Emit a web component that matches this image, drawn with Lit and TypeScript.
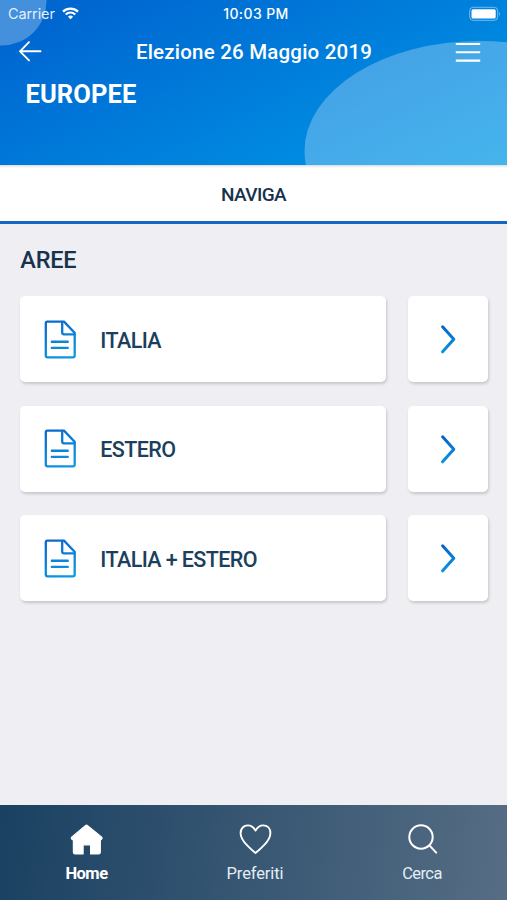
import { LitElement, html, css, svg } from "lit";
import { customElement, property } from "lit/decorators.js";

@customElement("area-row")
class AreaRow extends LitElement {
  @property() label = "";

  static styles = css`
    :host { display: grid; grid-template-columns: 366px 80px; gap: 21.7px; height: 86px; }
    .card {
      display: flex; align-items: center; background: #fff; border-radius: 5px;
      box-shadow: 1px 2px 3px rgba(0, 0, 0, 0.17);
    }
    .doc { width: 32px; height: 39px; margin-left: 24px; flex: none; }
    .label {
      margin: 3px 0 0 24px; color: #1c3f5e; font-size: 21.5px; line-height: 28px;
      font-weight: 500; letter-spacing: -0.6px; white-space: pre;
    }
    .go { justify-content: center; }
    .chevron { width: 18px; height: 32px; }
  `;

  render() {
    return html`
      <div class="card">
        <svg class="doc" viewBox="0 0 32 38" preserveAspectRatio="none" fill="none" stroke="url(#g)" stroke-width="2.3" stroke-linejoin="round" stroke-linecap="round">
          <defs><linearGradient id="g" gradientUnits="userSpaceOnUse" x1="6" y1="0" x2="22" y2="38">
            <stop offset="0" stop-color="#0b68cc" /><stop offset="1" stop-color="#0d98e2" />
          </linearGradient></defs>
          <path d="M3.2 1.6H20L30.7 12.5V34.6Q30.7 36.4 28.8 36.4H3.6Q1.8 36.4 1.8 34.6V3.3Q1.8 1.600 3.200 1.600Z" />
          <path d="M18.2 2V12.200Q18.200 14 20 14H30.500" />
          <path d="M7.800 21.200H23.800M7.800 27.100H23.800" />
        </svg>
        <span class="label">${this.label}</span>
      </div>
      <div class="card go">
        <svg class="chevron" viewBox="0 0 18 32" fill="none" stroke="url(#c)" stroke-width="3" stroke-linecap="round" stroke-linejoin="round">
          <defs><linearGradient id="c" gradientUnits="userSpaceOnUse" x1="4" y1="3" x2="9" y2="29">
            <stop offset="0" stop-color="#0860c6" /><stop offset="1" stop-color="#0994e2" />
          </linearGradient></defs>
          <path d="M3.6 3.8L14.8 16.3L3.6 28.8" />
        </svg>
      </div>`;
  }
}

const homeIcon = svg`<path fill="#fff" stroke="#fff" stroke-width="1.2" stroke-linejoin="round"
  d="M16.5 2.1Q17 2.1 17.6 2.6L31.7 14.1Q32.6 15.2 31.4 16.4L30.3 17V29.2Q30.3 31 28.5 31H20.600V21.800H13.100V31H5.2Q3.4 31 3.4 29.2V17L2 16.4Q.8 15.2 1.7 14.1L15.4 2.6Q16 2.1 16.5 2.1Z"/>`;
const heartIcon = svg`<path fill="none" stroke="#fff" stroke-width="1.9" stroke-linejoin="round"
  d="M16.5 30Q14 28.2 8.2 22.4Q1.6 15.6 1.6 10.2C1.6 5.4 4.7 2.4 8.8 2.4C12.3 2.4 14.7 4.3 16.5 7.6C18.3 4.3 20.7 2.4 24.2 2.4C28.3 2.4 31.4 5.4 31.4 10.2Q31.4 15.6 24.8 22.4Q19 28.2 16.5 30Z"/>`;
const searchIcon = svg`<g fill="none" stroke="#fff" stroke-width="2" stroke-linecap="round">
  <circle cx="15" cy="14" r="11.7"/><path d="M23.400 22.400L30.200 29.600"/></g>`;

@customElement("app-root")
class AppRoot extends LitElement {
  static styles = css`
    :host {
      display: flex; flex-direction: column; height: 900px; width: 507px; overflow: hidden;
      background: #efeef3; font-family: Roboto, "Liberation Sans", sans-serif; color: #17324d;
    }
    .header {
      position: relative; flex: none; height: 164.5px; overflow: hidden; color: #fff;
      background: linear-gradient(155deg, #0067d1 12%, #0091e4 85%, #0098e5);
    }
    .circles { position: absolute; inset: 0; width: 507px; height: 165px; }
    .status {
      position: relative; display: grid; grid-template-columns: 1fr auto 1fr; align-items: center;
      height: 27px; padding: 0 6px 0 8px; font-family: Inter, sans-serif; font-size: 14.5px;
    }
    .carrier { display: flex; align-items: center; gap: 7px; color: rgba(255, 255, 255, 0.88); letter-spacing: -0.1px; }
    .wifi { width: 17px; height: 13px; }
    .time { font-weight: 500; font-size: 14px; letter-spacing: 0.4px; padding-left: 3px; }
    .battery { width: 33px; height: 16px; justify-self: end; }
    .bar {
      position: relative; display: grid; grid-template-columns: 26px 1fr 26px; align-items: center;
      height: 49px; padding: 0 26px 0 18px;
    }
    .title { text-align: center; font-size: 20.5px; font-weight: 500; letter-spacing: 0.2px; padding: 1px 0 0 9px; }
    .icon { width: 26px; height: 24px; }
    .heading {
      position: relative; margin: 3px 0 0 25.5px; font-size: 25.5px; line-height: 30px; font-weight: 700; letter-spacing: 0.1px;
    }
    .tab {
      flex: none; height: 59px; box-sizing: border-box; border-bottom: 3px solid #1766c6; background: #fff; padding-top: 3px;
      display: flex; align-items: center; justify-content: center; font-size: 19px; font-weight: 500;
      letter-spacing: -0.6px; box-shadow: inset 0 3px 3px -2px rgba(0, 40, 80, 0.2);
    }
    .content { flex: 1; padding: 21px 19px 0 20.3px; }
    .section { font-size: 23.5px; line-height: 30px; font-weight: 500; letter-spacing: -0.2px; }
    .rows { display: flex; flex-direction: column; gap: 23.5px; margin-top: 21.5px; }
    .nav {
      flex: none; height: 95.5px; display: grid; grid-template-columns: 173px 164px 170px;
      background: linear-gradient(97deg, #1a4162, #566d84); color: #e3eef7;
    }
    .item { display: flex; flex-direction: column; align-items: center; padding-top: 18px; font-size: 16.5px; line-height: 22px; gap: 7.5px; letter-spacing: -0.1px; }
    .item svg { width: 33px; height: 33px; }
    .item:last-child { letter-spacing: -0.6px; }
    .active { color: #fff; font-weight: 700; letter-spacing: -0.5px; }
  `;

  render() {
    return html`
      <div class="header">
        <svg class="circles" viewBox="0 0 507 165">
          <circle cx="2" cy="1" r="44.5" fill="#fff" fill-opacity="0.27" />
          <ellipse cx="480" cy="151" rx="175.500" ry="110" fill="#fff" fill-opacity="0.27" />
        </svg>
        <div class="status">
          <div class="carrier"><span>Carrier</span>
            <svg class="wifi" viewBox="0 0 17 13" fill="none" stroke="#fff" stroke-width="2.2">
              <path d="M1 4.6Q4.300 1.600 8.500 1.600T16 4.600" /><path d="M3.700 7.500Q5.900 5.500 8.500 5.500T13.300 7.500" />
              <path d="M8.500 12.300L5.900 9.700Q8.500 7.500 11.100 9.700Z" fill="#fff" stroke="none" />
            </svg>
          </div>
          <span class="time">10:03 PM</span>
          <svg class="battery" viewBox="0 0 33 16">
            <rect x="1.700" y="1.300" width="28" height="13" rx="3.500" fill="none" stroke="#fff" stroke-opacity="0.45" />
            <rect x="3.500" y="3.200" width="24.200" height="9.200" rx="1.500" fill="#fff" />
            <path d="M31 5.500Q32.800 7.800 31 10Z" fill="#fff" fill-opacity="0.5" />
          </svg>
        </div>
        <div class="bar">
          <svg class="icon" viewBox="0 0 26 24" fill="none" stroke="#fff" stroke-width="1.900" stroke-linecap="round" stroke-linejoin="round">
            <path d="M22.500 11.300H2M11 2.200L2 11.300L11 20.400" />
          </svg>
          <span class="title">Elezione 26 Maggio 2019</span>
          <svg class="icon" viewBox="0 0 26 24" stroke="#fff" stroke-width="2.100">
            <path d="M.8 4H25.200M.8 12.300H25.200M.8 20.600H25.200" />
          </svg>
        </div>
        <div class="heading">EUROPEE</div>
      </div>
      <div class="tab">NAVIGA</div>
      <div class="content">
        <div class="section">AREE</div>
        <div class="rows">
          ${["ITALIA", "ESTERO", "ITALIA + ESTERO"].map((l) => html`<area-row label=${l}></area-row>`)}
        </div>
      </div>
      <div class="nav">
        <div class="item active"><svg viewBox="0 0 33 33">${homeIcon}</svg><span>Home</span></div>
        <div class="item"><svg viewBox="0 0 33 33">${heartIcon}</svg><span>Preferiti</span></div>
        <div class="item"><svg viewBox="0 0 33 33">${searchIcon}</svg><span>Cerca</span></div>
      </div>`;
  }
}
